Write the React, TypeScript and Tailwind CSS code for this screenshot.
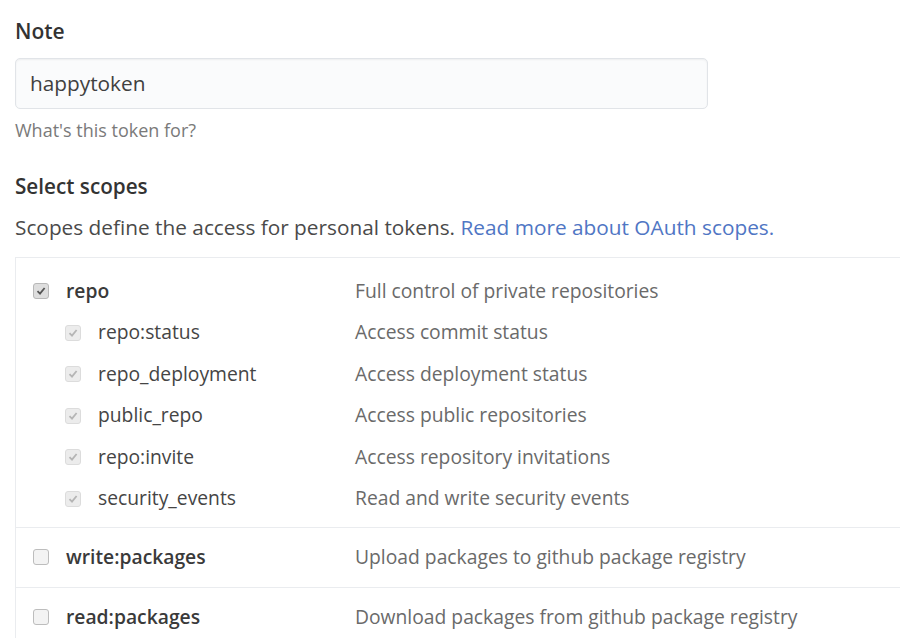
const subScopes = [
  { name: "repo:status", desc: "Access commit status" },
  { name: "repo_deployment", desc: "Access deployment status" },
  { name: "public_repo", desc: "Access public repositories" },
  { name: "repo:invite", desc: "Access repository invitations" },
  { name: "security_events", desc: "Read and write security events" },
];

function Check({ checked, dim }: { checked?: boolean; dim?: boolean }) {
  return (
    <span
      className={
        "flex h-[16px] w-[16px] shrink-0 items-center justify-center rounded-[3px] border " +
        (dim
          ? "border-[#dcdcdc] bg-[#ececec]"
          : checked
          ? "border-[#b8b8b8] bg-[#dedede]"
          : "border-[#bdbdbd] bg-[#f3f3f3]")
      }
    >
      {checked && (
        <svg width="10" height="10" viewBox="0 0 10 10">
          <path
            d="M1.5 5.2 L4 7.6 L8.6 2"
            fill="none"
            stroke={dim ? "#b5b5b5" : "#555"}
            strokeWidth="1.8"
          />
        </svg>
      )}
    </span>
  );
}

function Row({ name, desc }: { name: string; desc: string }) {
  return (
    <div className="flex h-[60px] items-center border-t border-[#eaecef] pl-[17px]">
      <Check />
      <span className="ml-[17px] w-[289px] font-semibold text-[#3a3a3a]">{name}</span>
      <span className="text-[#6a6a6a]">{desc}</span>
    </div>
  );
}

export default function App() {
  return (
    <div className="h-[638px] w-[900px] overflow-hidden bg-white pl-[15px] pt-[18px] font-['Open_Sans',sans-serif] text-[19.3px] text-[#3a3a3a]">
      <div className="text-[21px] font-semibold leading-[26px] text-[#333]">Note</div>
      <div className="mt-[14px] flex h-[51px] w-[693px] items-center rounded-[5px] border border-[#e1e4e8] bg-[#fafbfc] pl-[14px] text-[20.8px] text-[#404040] shadow-[inset_0_1px_2px_rgba(27,31,35,0.06)]">
        happytoken
      </div>
      <p className="mt-[10px] text-[18px] leading-[22px] text-[#7a7a7a]">What's this token for?</p>

      <div className="mt-[32px] text-[20.7px] font-semibold leading-[26px] text-[#333]">Select scopes</div>
      <p className="mt-[15px] text-[20.8px] leading-[26px] text-[#4a4a4a]">
        Scopes define the access for personal tokens.{" "}
        <a className="text-[#5076c4]">Read more about OAuth scopes.</a>
      </p>

      <div className="mt-[17px] border-l border-t border-[#eaecef]">
        <div className="pb-[7px]">
          <div className="flex h-[54px] items-center pl-[17px] pt-[12px]">
            <Check checked />
            <span className="ml-[17px] w-[289px] font-semibold text-[#3a3a3a]">repo</span>
            <span className="text-[#6a6a6a]">Full control of private repositories</span>
          </div>
          {subScopes.map((s) => (
            <div key={s.name} className="flex h-[41.5px] items-center pl-[49px]">
              <Check checked dim />
              <span className="ml-[17px] w-[257px] text-[#454545]">{s.name}</span>
              <span className="text-[#6a6a6a]">{s.desc}</span>
            </div>
          ))}
        </div>
        <Row name="write:packages" desc="Upload packages to github package registry" />
        <Row name="read:packages" desc="Download packages from github package registry" />
      </div>
    </div>
  );
}
